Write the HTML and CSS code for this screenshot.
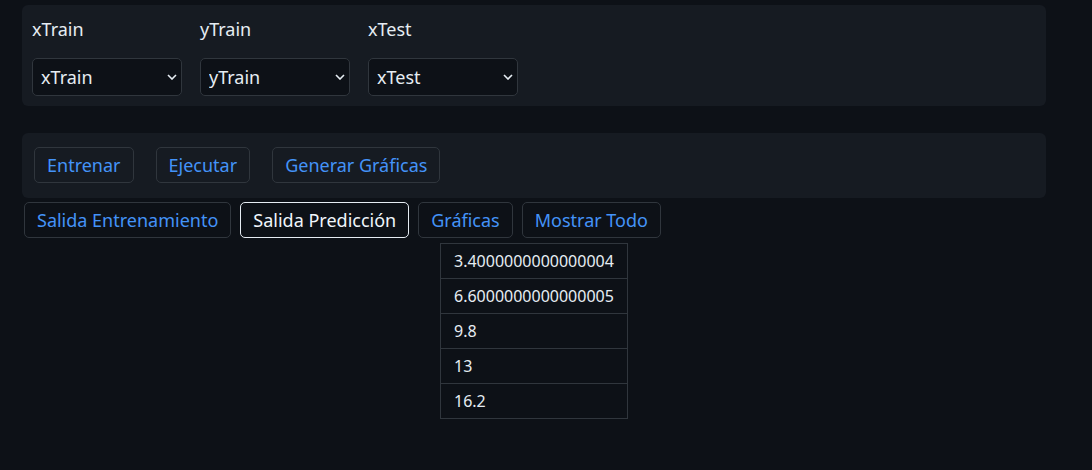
FILE: index.html
```html
<!DOCTYPE html>
<html lang="es">
<head>
<meta charset="utf-8">
<title>Modelo</title>
<link rel="stylesheet" href="styles.css">
</head>
<body>
<div class="page">
  <section class="panel inputs">
    <div class="field">
      <label class="label">xTrain</label>
      <div class="select-wrap">
        <select class="select"><option>xTrain</option></select>
        <svg class="chev" width="10" height="6" viewBox="0 0 10 6"><path d="M1 1l4 4 4-4" fill="none" stroke="#e6edf3" stroke-width="1.6"/></svg>
      </div>
    </div>
    <div class="field">
      <label class="label">yTrain</label>
      <div class="select-wrap">
        <select class="select"><option>yTrain</option></select>
        <svg class="chev" width="10" height="6" viewBox="0 0 10 6"><path d="M1 1l4 4 4-4" fill="none" stroke="#e6edf3" stroke-width="1.6"/></svg>
      </div>
    </div>
    <div class="field">
      <label class="label">xTest</label>
      <div class="select-wrap">
        <select class="select"><option>xTest</option></select>
        <svg class="chev" width="10" height="6" viewBox="0 0 10 6"><path d="M1 1l4 4 4-4" fill="none" stroke="#e6edf3" stroke-width="1.6"/></svg>
      </div>
    </div>
  </section>

  <section class="panel actions">
    <button class="btn">Entrenar</button>
    <button class="btn">Ejecutar</button>
    <button class="btn">Generar Gráficas</button>
  </section>

  <nav class="tabs">
    <button class="btn tab">Salida Entrenamiento</button>
    <button class="btn tab active">Salida Predicción</button>
    <button class="btn tab">Gráficas</button>
    <button class="btn tab">Mostrar Todo</button>
  </nav>

  <table class="results">
    <tr><td>3.4000000000000004</td></tr>
    <tr><td>6.6000000000000005</td></tr>
    <tr><td>9.8</td></tr>
    <tr><td>13</td></tr>
    <tr><td>16.2</td></tr>
  </table>
</div>
</body>
</html>
```

FILE: styles.css
```css
* { box-sizing: border-box; }
html, body {
  margin: 0;
  padding: 0;
  background: #0d1117;
  color: #e6edf3;
  font-family: "Noto Sans", "Open Sans", sans-serif;
}
.page {
  width: 1024px;
  margin-left: 22px;
  padding-top: 5px;
}
.panel {
  background: #161b22;
  border-radius: 6px;
}
.inputs {
  display: flex;
  gap: 18px;
  padding: 11px 10px 10px;
}
.field {
  display: flex;
  flex-direction: column;
  width: 150px;
}
.label {
  font-size: 18px;
  line-height: 27px;
  margin-bottom: 15px;
}
.select-wrap {
  position: relative;
}
.select {
  appearance: none;
  -webkit-appearance: none;
  display: block;
  width: 150px;
  height: 38px;
  background: #0d1117;
  color: #e6edf3;
  border: 1px solid #30363d;
  border-radius: 5px;
  padding: 0 8px;
  font-family: inherit;
  font-size: 18px;
}
.chev {
  position: absolute;
  right: 5px;
  top: 16px;
  pointer-events: none;
}
.actions {
  margin-top: 27px;
  display: flex;
  gap: 22px;
  padding: 14px 12px 15px;
}
.btn {
  height: 36px;
  background: transparent;
  color: #4493f8;
  border: 1px solid #30363d;
  border-radius: 5px;
  padding: 0 12px;
  font-family: inherit;
  font-size: 18px;
  line-height: 24px;
}
.tabs {
  margin-top: 4px;
  margin-left: 2px;
  display: flex;
  gap: 9px;
}
.tab.active {
  color: #f0f6fc;
  border-color: #e6edf3;
}
.results {
  margin-top: 5px;
  margin-left: 418px;
  border-collapse: collapse;
  width: 188px;
}
.results td {
  border: 1px solid #30363d;
  height: 35px;
  padding: 0 13px;
  font-size: 16px;
  color: #e6edf3;
}
```
